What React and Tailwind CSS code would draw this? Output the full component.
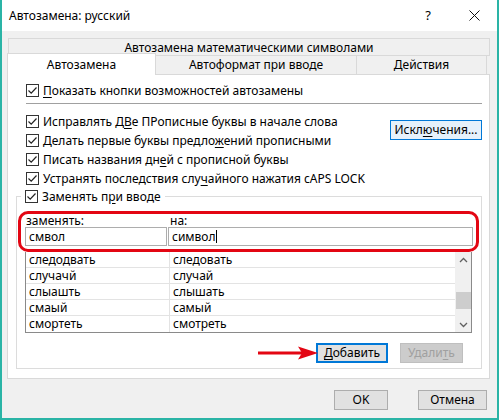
import React from "react";

const rows = [
  ["следодвать", "следовать"],
  ["случачй", "случай"],
  ["слыашть", "слышать"],
  ["смаый", "самый"],
  ["смортеть", "смотреть"],
];

function Check() {
  return (
    <span className="w-[13px] h-[13px] border border-[#333] bg-white flex items-center justify-center shrink-0">
      <svg width="11" height="11" viewBox="0 0 11 11">
        <path d="M1.5 5.5 L4.2 8.2 L9.5 2.5" fill="none" stroke="#222" strokeWidth="1.2" />
      </svg>
    </span>
  );
}

function U({ children }) {
  return <span className="underline underline-offset-2">{children}</span>;
}

function CheckRow({ children }) {
  return (
    <div className="h-[19px] flex items-center gap-[4px]">
      <Check />
      <span className="whitespace-nowrap">{children}</span>
    </div>
  );
}

export default function App() {
  return (
    <div
      className="relative w-[499px] h-[420px] bg-[#f0f0f0] border-x-2 border-b-2 border-[#2ab4a6] flex flex-col text-[12px] text-black overflow-hidden"
      style={{ fontFamily: '"Noto Sans", "Open Sans", sans-serif' }}
    >
      {/* title bar */}
      <div className="h-[31px] bg-white flex items-center shrink-0">
        <span className="pl-[7px] text-[12px]">Автозамена: русский</span>
        <div className="ml-auto flex items-center">
          <span className="w-[46px] text-center text-[13px]">?</span>
          <span className="w-[46px] flex justify-center">
            <svg width="11" height="11" viewBox="0 0 11 11">
              <path d="M0.5 0.5 L10.5 10.5 M10.5 0.5 L0.5 10.5" stroke="#111" strokeWidth="1" />
            </svg>
          </span>
        </div>
      </div>

      <div className="flex-1 flex flex-col pl-[5px] pr-[8px] pt-[7px]">
        {/* tabs */}
        <div className="ml-[1px] w-[482px] h-[17px] border border-b-0 border-[#d9d9d9] flex items-center justify-center leading-none pt-px">
          Автозамена математическими символами
        </div>
        <div className="flex h-[19px] border-t border-[#d9d9d9] w-[483px]">
          <div className="relative z-10 w-[149px] h-[22px] -mt-[3px] bg-white border border-b-0 border-[#d9d9d9] flex items-center justify-center">
            Автозамена
          </div>
          <div className="w-[201px] border-r border-[#d9d9d9] flex items-center justify-center">
            Автоформат при вводе
          </div>
          <div className="w-[130px] border-r border-[#d9d9d9] flex items-center justify-center">
            Действия
          </div>
        </div>

        {/* panel */}
        <div className="w-[483px] h-[305px] bg-white border border-[#d9d9d9] flex flex-col">
          <div className="pl-[18px] pt-[6px]">
            <CheckRow>
              <U>П</U>оказать кнопки возможностей автозамены
            </CheckRow>
          </div>
          <div className="ml-[18px] mt-[3px] w-[456px] h-px bg-[#a0a0a0]" />

          <div className="flex mt-[8px] pl-[18px]">
            <div className="flex flex-col">
              <CheckRow>
                Исправлять Д<U>В</U>е ПРописные буквы в начале слова
              </CheckRow>
              <CheckRow>
                Делать первые буквы предло<U>ж</U>ений прописными
              </CheckRow>
              <CheckRow>
                Писать названия дн<U>е</U>й с прописной буквы
              </CheckRow>
              <CheckRow>
                Устранять последствия слу<U>ч</U>айного нажатия cAPS LOCK
              </CheckRow>
            </div>
            <button className="ml-auto mr-[7px] mt-[8px] w-[92px] h-[20px] bg-[#e5f1fb] border border-[#0078d7] flex items-center justify-center">
              Искл<U>ю</U>чения...
            </button>
          </div>

          {/* group */}
          <div className="ml-[8px] mt-[8px] w-[466px] h-[173px] border border-[#dcdcdc] flex flex-col">
            <div className="-mt-[10px] ml-[4px] w-fit h-[19px] bg-white px-[4px] flex items-center gap-[4px]">
              <Check />
              <span>
                Заменять п<U>р</U>и вводе
              </span>
            </div>

            <div className="ml-px mt-[5px] w-[461px] h-[41px] border-[3px] border-[#e30613] rounded-[10px] flex flex-col pl-[4px]">
              <div className="flex h-[13px] items-center leading-none pt-px">
                <span className="w-[145px] pl-px">
                  з<U>а</U>менять:
                </span>
                <span>
                  <U>н</U>а:
                </span>
              </div>
              <div className="flex">
                <div className="w-[142px] h-[19px] border border-[#adadad] flex items-center pl-[3px]">смвол</div>
                <div className="ml-px w-[305px] h-[19px] border border-[#adadad] flex items-center pl-[3px]">
                  символ<span className="w-px h-[13px] bg-black" />
                </div>
              </div>
            </div>

            {/* list */}
            <div className="ml-[8px] w-[447px] h-[81px] border-x border-b border-[#8a8a8a] flex">
              <div className="flex-1 flex flex-col">
                {rows.map((r, i) => (
                  <div key={i} className={`h-[16px] flex ${i < 4 ? "border-b border-[#e3e3e3]" : ""}`}>
                    <span className="w-[144px] pl-[3px] border-r border-[#e3e3e3] flex items-center">{r[0]}</span>
                    <span className="pl-[3px] flex items-center">{r[1]}</span>
                  </div>
                ))}
              </div>
              <div className="w-[16px] bg-[#f0f0f0] flex flex-col items-center">
                <svg className="mt-[5px]" width="9" height="6" viewBox="0 0 9 6">
                  <path d="M1 5 L4.5 1.5 L8 5" fill="none" stroke="#606060" strokeWidth="1.3" />
                </svg>
                <div className="mt-[29px] w-[15px] h-[17px] bg-[#cdcdcd]" />
                <svg className="mt-auto mb-[4px]" width="9" height="6" viewBox="0 0 9 6">
                  <path d="M1 1 L4.5 4.5 L8 1" fill="none" stroke="#606060" strokeWidth="1.3" />
                </svg>
              </div>
            </div>

            <div className="flex justify-end gap-[12px] pr-[18px] mt-[10px]">
              <button className="w-[72px] h-[20px] bg-[#e1e1e1] border-2 border-[#0078d7] flex items-center justify-center">
                <span>
                  <U>Д</U>обавить
                </span>
              </button>
              <button className="w-[63px] h-[20px] bg-[#cccccc] border border-[#bfbfbf] text-[#a0a0a0] flex items-center justify-center">
                <span>
                  Удали<U>т</U>ь
                </span>
              </button>
            </div>
          </div>
        </div>

        {/* footer buttons */}
        <div className="flex justify-end gap-[30px] pr-[2px] mt-[11px]">
          <button className="w-[54px] h-[20px] bg-[#e1e1e1] border border-[#adadad]">OK</button>
          <button className="w-[69px] h-[20px] bg-[#e1e1e1] border border-[#adadad]">Отмена</button>
        </div>
      </div>

      {/* red arrow annotation */}
      <svg className="absolute left-[256px] top-[346px]" width="60" height="14" viewBox="0 0 60 14">
        <path d="M0 7 L44 7" stroke="#e30613" strokeWidth="3" />
        <path d="M40 0.5 L60 7 L40 13.5 L44 7 Z" fill="#e30613" />
      </svg>
    </div>
  );
}
